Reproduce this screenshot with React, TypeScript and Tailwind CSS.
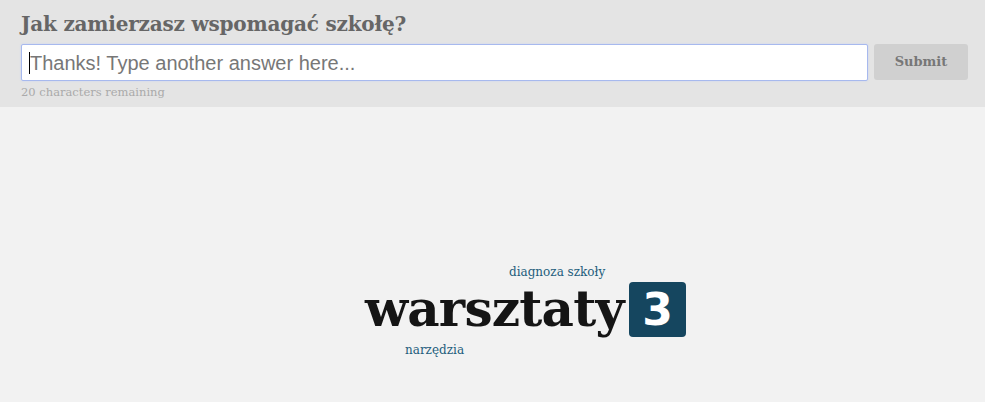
import React from 'react';

const serif = "font-['DejaVu_Serif',serif]";

const App = () => (
  <div className="w-[985px] h-[402px] bg-[#f2f2f2] flex flex-col overflow-hidden">
    <div className="bg-[#e4e4e4] pl-[21px] pr-[17px] pt-[10px] h-[107px]">
      <h1 className={`${serif} font-bold text-[20px] leading-[28px] text-[#666] tracking-[-0.2px]`}>Jak zamierzasz wspomagać szkołę?</h1>
      <div className="flex gap-[6px] mt-[6px]">
        <div className="flex-1 h-[37px] bg-white border border-[#a7b9ee] rounded-[2px] flex items-center pl-[7px] shadow-[0_0_2px_#c4d2f5]">
          <span className="w-px h-[22px] bg-black"></span>
          <span className="font-['Liberation_Sans',sans-serif] text-[20px] text-[#777] leading-none">Thanks! Type another answer here...</span>
        </div>
        <button className={`${serif} w-[94px] h-[36px] bg-[#d0d0d0] rounded-[3px] text-[13px] font-bold text-[#777]`}>Submit</button>
      </div>
      <p className={`${serif} text-[11.5px] text-[#aaa] mt-[4px] leading-[14px]`}>20 characters remaining</p>
    </div>
    <div className="relative flex-1">
      <span className={`${serif} absolute left-[509px] top-[159px] text-[12px] text-[#235d7c] leading-none`}>diagnoza szkoły</span>
      <span className={`${serif} absolute left-[365px] top-[177px] text-[50px] font-bold text-[#151515] leading-none tracking-[-0.8px]`}>warsztaty</span>
      <span className="absolute left-[629px] top-[175px] w-[57px] h-[55px] bg-[#15465f] rounded-[4px] flex items-center justify-center font-['DejaVu_Sans',sans-serif] font-bold text-[44px] text-white leading-none">3</span>
      <span className={`${serif} absolute left-[405px] top-[237px] text-[12px] text-[#235d7c] leading-none`}>narzędzia</span>
    </div>
  </div>
);

export default App;
